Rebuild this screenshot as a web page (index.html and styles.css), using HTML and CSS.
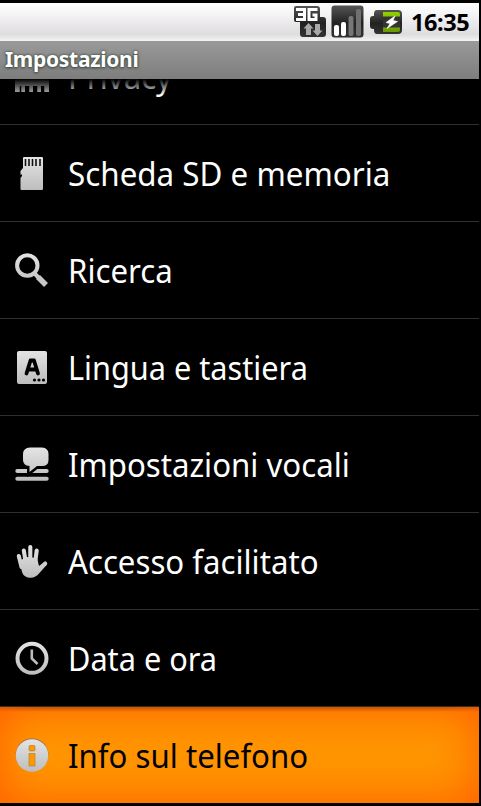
FILE: index.html
```html
<!DOCTYPE html>
<html lang="it">
<head>
<meta charset="utf-8">
<title>Impostazioni</title>
<link rel="stylesheet" href="styles.css">
</head>
<body>
<svg class="defs" width="0" height="0" aria-hidden="true">
  <defs>
    <linearGradient id="silver" gradientUnits="userSpaceOnUse" x1="0" y1="0" x2="0" y2="36"><stop offset="0" stop-color="#e6e6e6"/><stop offset="1" stop-color="#bcbcbc"/></linearGradient>
    <linearGradient id="dark" x1="0" y1="0" x2="0" y2="1"><stop offset="0" stop-color="#555"/><stop offset=".55" stop-color="#222"/><stop offset="1" stop-color="#333"/></linearGradient>
    <linearGradient id="green" x1="0" y1="0" x2="0" y2="1"><stop offset="0" stop-color="#91d100"/><stop offset="1" stop-color="#689900"/></linearGradient>
  </defs>
</svg>
<div class="phone">
  <header class="status">
    <svg class="net" width="34" height="34" viewBox="0 0 34 34">
      <path d="M3 1H24Q27 1 27 4V12H30Q33 12 33 15V29Q33 32 30 32H10Q7 32 7 29V17H3Q1 17 1 15V3Q1 1 3 1Z" fill="url(#dark)"/>
      <path d="M3 4.500H11.500V14.500H3M5 9.500H11.500M24.500 4.500H16V14.500H23V10H19.500" fill="none" stroke="#fff" stroke-width="3"/>
      <path d="M15.500 18L20.500 23.500H18V30H13V23.500H10.500ZM24.500 31L19.500 25.500H22V19H27V25.500H29.500Z" fill="#a8a8a8"/>
    </svg>
    <svg class="signal" width="33" height="34" viewBox="0 0 33 34">
      <rect x=".5" y=".5" width="32" height="32" rx="3" fill="url(#dark)"/>
      <rect x="3" y="20" width="5" height="11" rx="2" fill="#fff"/>
      <rect x="10" y="17" width="5" height="14" rx="2" fill="#fff"/>
      <rect x="17.500" y="11" width="5" height="20" rx="2" fill="#777"/>
      <rect x="25" y="4" width="5" height="27" rx="2" fill="#707070"/>
    </svg>
    <svg class="battery" width="34" height="34" viewBox="0 0 34 34">
      <path d="M8 5H29Q33 5 33 9V25Q33 29 29 29H8Q5 29 5 25V24H4Q1 24 1 21V14Q1 11 4 11H5V9Q5 5 8 5Z" fill="url(#dark)"/>
      <path d="M14 7H29Q31 7 31 9V25Q31 27 29 27H14Z" fill="url(#green)"/>
      <path d="M14 11.500H31V22.500H14Z" fill="#333"/>
      <path d="M26 11L17 17.500L21 18.500L18 23.500L28.500 16.500L24 15.500Z" fill="#fff" stroke="#fff" stroke-width=".6"/>
    </svg>
    <time class="clock">16:35</time>
  </header>
  <h1 class="title">Impostazioni</h1>
  <main class="list">
    <div class="row first">
      <svg class="icon" viewBox="0 0 36 36"><path d="M1 5H35V34H30V28H27V34H22V28H19V34H14V28H11V34H1V28Z" fill="url(#silver)"/><path d="M6.500 28V34M14.500 28V34M22.500 28V34M29.500 28V34" stroke="#000" stroke-width="1.500"/></svg>
      <span class="label privacy">Privacy</span>
    </div>
    <div class="row">
      <svg class="icon" viewBox="0 0 36 36"><path d="M9 3Q9 2 10 2H28Q29 2 29 3V33.500Q29 35 28 35H7.500Q6.500 35 6.500 34V23L8 21V19.500H6.500V16L9 13Z" fill="url(#silver)"/><path d="M11.500 4V11M15 4V11M18.500 4V11M22 4V11M26 4V11" stroke="#111" stroke-width="1.600"/></svg>
      <span class="label sd">Scheda SD e memoria</span>
    </div>
    <div class="row">
      <svg class="icon" viewBox="0 0 36 36"><circle cx="13.300" cy="13.500" r="10.200" fill="none" stroke="url(#silver)" stroke-width="4"/><path d="M21 22L25 26" stroke="#ccc" stroke-width="4"/><path d="M24 25L32 33" stroke="#c6c6c6" stroke-width="5.500" stroke-linejoin="round"/></svg>
      <span class="label search">Ricerca</span>
    </div>
    <div class="row">
      <svg class="icon" viewBox="0 0 36 36"><rect x="3" y="2" width="30" height="33" rx="2" fill="url(#silver)"/><path d="M12.500 24.500L16.500 11.500H20L24 24.500M14.500 20.500H22" fill="none" stroke="#000" stroke-width="3.800" stroke-linecap="round" stroke-linejoin="round"/><g><circle cx="20.500" cy="31" r="1.600"/><circle cx="25" cy="31" r="1.600"/><circle cx="29.500" cy="31" r="1.600"/></g></svg>
      <span class="label lang">Lingua e tastiera</span>
    </div>
    <div class="row">
      <svg class="icon" viewBox="0 0 36 36"><path d="M3.300 25H32.700M3.300 32.700H32.700" fill="none" stroke="url(#silver)" stroke-width="4" stroke-linecap="round"/><path d="M16 1.500H28Q34.500 2 34.500 8V14Q34.500 20 28 20H23L15.500 26V20Q9 19.500 9 14V8Q9 2 16 1.500Z" fill="url(#silver)" stroke="#000" stroke-width="5" paint-order="stroke"/></svg>
      <span class="label voice">Impostazioni vocali</span>
    </div>
    <div class="row">
      <svg class="icon" viewBox="0 0 36 36"><path d="M5.500 18L8 29Q10 34.800 16.500 34.800Q22 34.500 25 30.500L33 21.500Q32.500 19 30 20L25 23L23 15L12 14Z" fill="url(#silver)"/><path d="M4.800 13L7.500 24M9.800 7.500L12 21M16.300 4V21M22.700 7.500L21 21M31.200 20.500L24 27" fill="none" stroke="url(#silver)" stroke-width="4.100" stroke-linecap="round"/></svg>
      <span class="label access">Accesso facilitato</span>
    </div>
    <div class="row">
      <svg class="icon" viewBox="0 0 36 36"><circle cx="18" cy="18.300" r="14.500" fill="none" stroke="url(#silver)" stroke-width="4"/><path d="M17.800 9.500V18.500L23.500 24" fill="none" stroke="#bdbdbd" stroke-width="2.600"/></svg>
      <span class="label date">Data e ora</span>
    </div>
    <div class="row selected">
      <svg class="icon" viewBox="0 0 36 36"><circle cx="18" cy="17.700" r="16.500" fill="#a5774a"/><circle cx="18" cy="18.500" r="16.300" fill="url(#silver)"/><rect x="15" y="8.500" width="6" height="5.500" rx="1" fill="#ff9700" stroke="#a57b3e" stroke-width=".6"/><path d="M15 16.500H21V29H15Z" fill="#ff9700" stroke="#a57b3e" stroke-width=".6"/></svg>
      <span class="label info">Info sul telefono</span>
    </div>
  </main>
</div>
</body>
</html>
```
FILE: styles.css
```css
* { box-sizing: border-box; }
body { margin: 0; background: #000; font-family: "Noto Sans", sans-serif; overflow: hidden; }
.defs { display: block; }
.phone { width: 479px; height: 806px; padding-top: 3px; background: #000; display: flex; flex-direction: column; }
.status { height: 38px; flex: none; display: flex; align-items: flex-start; padding: 2px 9px 0 0; justify-content: flex-end; background: linear-gradient(#fff, #f5f4f5 30%, #dedcde 82%, #f5f4f5); }
.net { margin-right: 4px; }
.signal { margin-right: 5px; }
.battery { margin-right: 8px; }
.clock { font-size: 23.5px; font-weight: 700; line-height: 34px; color: #000; width: 59px; white-space: nowrap; letter-spacing: -.4px; }
.title { height: 38px; flex: none; margin: 0; padding-left: 5px; font-size: 21px; line-height: 37px; font-weight: 700; color: #fff; letter-spacing: -.3px; background: linear-gradient(#9a9a9a, #7d7d7d); text-shadow: 0 0 3px #344034, 0 1px 3px #465046; }
.list { height: 724px; overflow: hidden; position: relative; }
.list::before { content: ""; position: absolute; inset: 0 0 auto; height: 16px; background: linear-gradient(#000, transparent); z-index: 1; }
.row { height: 97px; display: flex; align-items: center; padding: 0 0 0 14px; border-bottom: 1px solid #303030; }
.first { margin-top: -51px; }
.icon { width: 36px; height: 36px; flex: none; margin-right: 18px; }
.label { font-size: 33px; line-height: 44px; padding-top: 2px; color: #fff; white-space: nowrap; transform-origin: 0 50%; transform: scaleX(.945); }
.sd { transform: scaleX(.95); }
.lang, .date { transform: scaleX(.93); }
.selected { height: 96px; border: 0; background: linear-gradient(rgba(120,50,0,.75), transparent 5px), #ff9500; box-shadow: inset 0 0 46px #ff5c00; }
.selected .label { color: #000; }
```
